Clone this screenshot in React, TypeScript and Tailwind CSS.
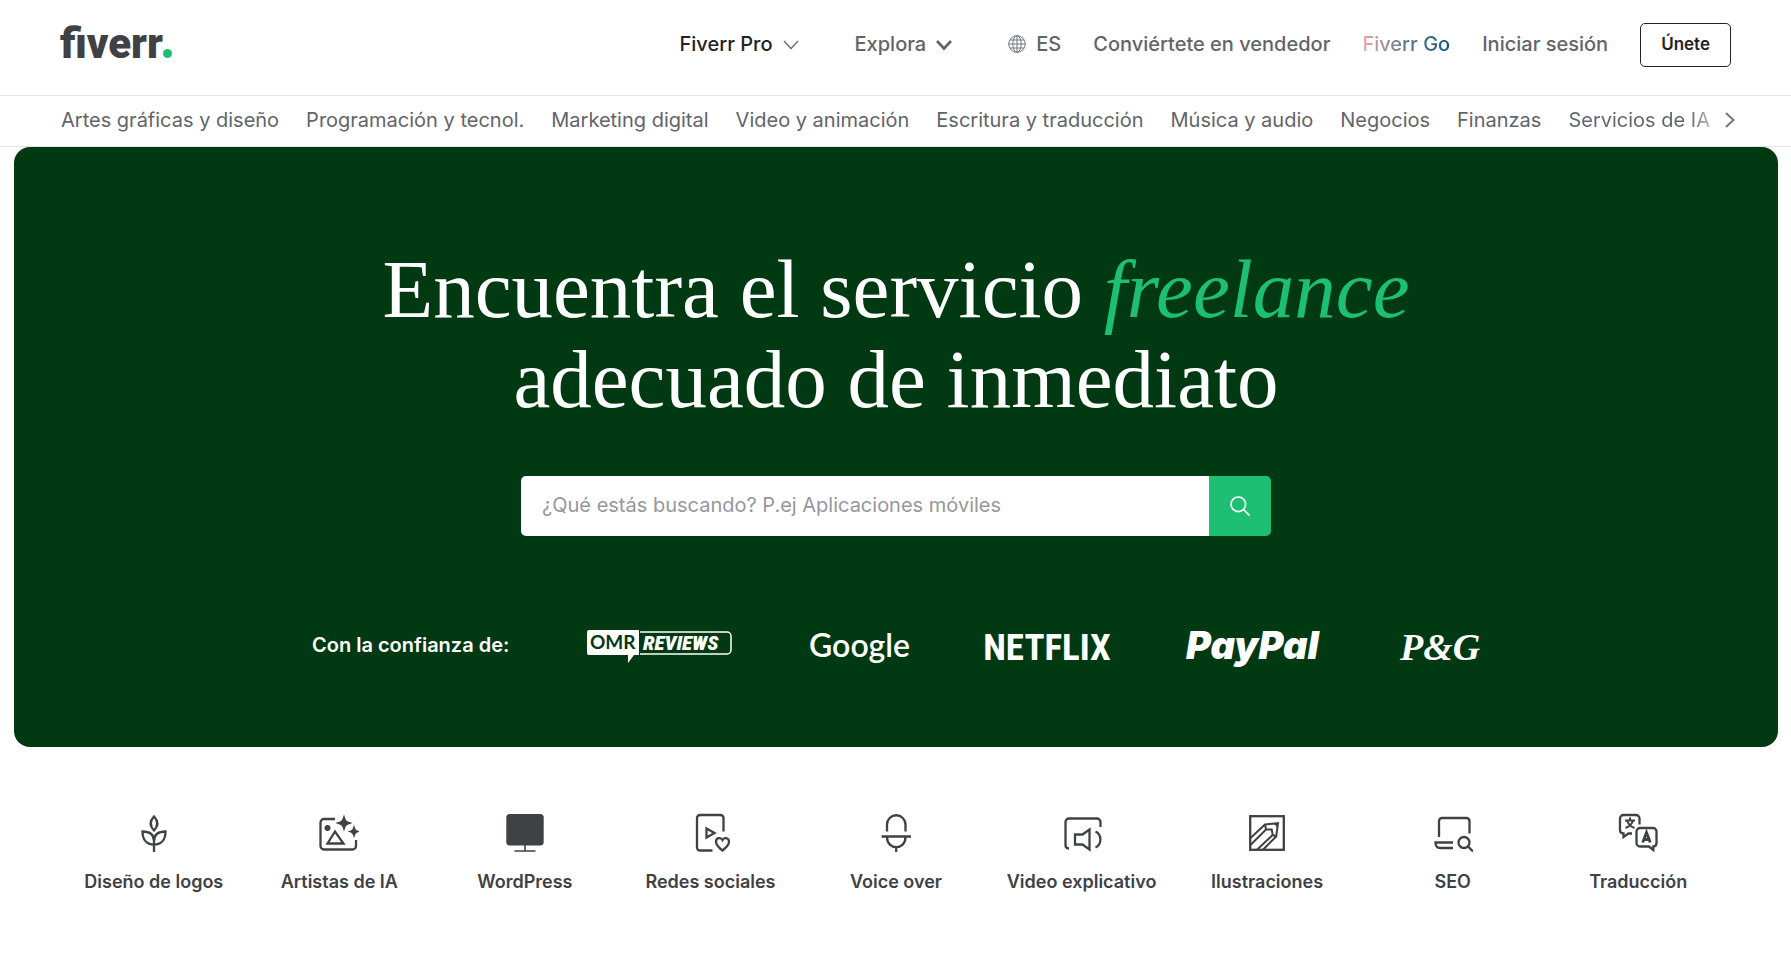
import type { ReactNode } from "react";

const categories = [
  "Artes gráficas y diseño",
  "Programación y tecnol.",
  "Marketing digital",
  "Video y animación",
  "Escritura y traducción",
  "Música y audio",
  "Negocios",
  "Finanzas",
  "Servicios de IA",
];

function Icon({ children }: { children: ReactNode }) {
  return (
    <svg
      className="size-10"
      viewBox="0 0 40 40"
      fill="none"
      stroke="#404145"
      strokeWidth="2.300"
      aria-hidden="true"
    >
      {children}
    </svg>
  );
}

function Chevron({ bold = false }: { bold?: boolean }) {
  return (
    <svg
      className="mt-0.5 h-4 w-4"
      viewBox="0 0 16 16"
      fill="none"
      stroke={bold ? "#62646a" : "#74767e"}
      strokeWidth={bold ? "2.6" : "1.6"}
      aria-hidden="true"
    >
      <path d="M1 4 8 11.500 15 4" />
    </svg>
  );
}

const services: { label: string; icon: ReactNode }[] = [
  {
    label: "Diseño de logos",
    icon: (
      <Icon>
        <path d="M20 3.500c-4.600 4.800-4.600 9.200 0 14 4.600-4.800 4.600-9.200 0-14Z" />
        <path d="M20 39V27M20 31.500C12.500 31.500 8.500 26.500 8.500 18.500 15.500 18.500 20 21.500 20 28M20 31.500C27.500 31.500 31.500 26.500 31.500 18.500 24.500 18.500 20 21.500 20 28" />
      </Icon>
    ),
  },
  {
    label: "Artistas de IA",
    icon: (
      <Icon>
        <path d="M16 6H5a3.500 3.500 0 0 0-3.500 3.500v23.500A3.500 3.500 0 0 0 5 36.500h28.500A3.500 3.500 0 0 0 37 33v-6" />
        <path d="M16 18.500 8.500 30.500h16Z" />
        <circle cx="8.500" cy="15" r="3" fill="#404145" stroke="none" />
        <path
          d="M25 3.700c1.200 4.300 2 5.100 6.300 6.300-4.300 1.200-5.100 2-6.300 6.300-1.200-4.300-2-5.100-6.300-6.300 4.300-1.200 5.100-2 6.300-6.300ZM35 14c.9 3.200 1.500 3.600 4.500 4.500-3 .9-3.600 1.500-4.500 4.500-.9-3-1.500-3.600-4.500-4.500 3-.9 3.600-1.300 4.500-4.500Z"
          fill="#404145"
          stroke="#404145"
          strokeWidth="1.300"
        />
      </Icon>
    ),
  },
  {
    label: "WordPress",
    icon: (
      <Icon>
        <rect x="1.300" y="1" width="37.400" height="31.500" rx="3.500" fill="#404145" stroke="none" />
        <path d="M20 32v5.500M9.500 38h21" strokeWidth="1.600" />
      </Icon>
    ),
  },
  {
    label: "Redes sociales",
    icon: (
      <Icon>
        <path d="M22.500 37.500H10A3 3 0 0 1 7 34.500V5a3 3 0 0 1 3-3h20.500a3 3 0 0 1 3 3v13.500" />
        <path d="M16.500 15.500v9l8-4.500Z" />
        <path d="M32.500 37.500c-3.500-2.600-6.500-5.300-6.500-8.700 0-4 4.800-5 6.500-1.800 1.700-3.200 6.500-2.200 6.500 1.800 0 3.400-3 6.100-6.500 8.700Z" />
      </Icon>
    ),
  },
  {
    label: "Voice over",
    icon: (
      <Icon>
        <path d="M11 18.500V11.500a9 9 0 0 1 18.500 0v7M5.500 23.500h29.500M11 24c0 13.500 18.500 13.500 18.500 0M20.200 34v5" />
      </Icon>
    ),
  },
  {
    label: "Video explicativo",
    icon: (
      <Icon>
        <path d="M7 35.500c-2.500 0-3.500-1-3.500-3.500V9A3.500 3.500 0 0 1 7 5.500h28A3.500 3.500 0 0 1 38.500 9v5" />
        <path d="M13 21.500h7.500l7-5v20l-7-5H13ZM33.500 18.500c6.500 3 6.500 13 0 16" />
      </Icon>
    ),
  },
  {
    label: "Ilustraciones",
    icon: (
      <Icon>
        <rect x="3.200" y="3.200" width="33.600" height="33.600" />
        <path
          d="M3.500 25 18 11.500 31 10.200 29.200 23.500 15.700 37M3.500 32 19 16.500h5.700l1 5.500L9.700 37M18 11.500l1 5M25.700 22l3.500 1.500"
          strokeWidth="2"
        />
        <path d="m26.500 10.500 4.500-.5-.6 4.500Z" fill="#404145" stroke="none" />
      </Icon>
    ),
  },
  {
    label: "SEO",
    icon: (
      <Icon>
        <path d="M6 24V8a3 3 0 0 1 3-3h24.500a3 3 0 0 1 3 3v12.500M20 29.500H2.500c0 3.500 1 5.500 4.500 5.500h13" />
        <circle cx="31" cy="29.500" r="5.500" />
        <path d="m35 33.500 5 5" />
      </Icon>
    ),
  },
  {
    label: "Traducción",
    icon: (
      <Icon>
        <path d="M14 20.500h-3.500L5.500 24v-3.500C3 20.500 2 19.500 2 17V5.500A3.500 3.500 0 0 1 5.500 2h12.500A3.500 3.500 0 0 1 21.500 5.500v6" />
        <path d="M22 15h13a3.500 3.500 0 0 1 3.500 3.500V30c0 2.500-1 3.500-3.200 3.500V37L31 33.500h-9a3.500 3.500 0 0 1-3.500-3.500V18.500A3.500 3.500 0 0 1 22 15Z" />
        <path d="M7 7.500h10M12 4.500v3M15 7.500c-.8 3.200-3.500 6-7.500 7.500M9 7.500c1 3.200 3.500 6 7.500 7.500" strokeWidth="2" />
        <path d="m24.700 29.500 3.800-10 3.800 10M26 26.500h5" strokeWidth="2.800" />
      </Icon>
    ),
  },
];

function OmrReviews() {
  return (
    <svg className="h-9 w-[145px] overflow-visible" viewBox="0 0 145 36" role="img" aria-label="OMR Reviews">
      <path d="M2 2h50v25h-5l-6 8v-8H2a2 2 0 0 1-2-2V4a2 2 0 0 1 2-2Z" fill="#fff" />
      <path d="M53 4h87a4 4 0 0 1 4 4v14a4 4 0 0 1-4 4H53" fill="none" stroke="#fff" strokeWidth="1.500" />
      <text x="3" y="21" fontFamily="Lato" fontWeight="700" fontSize="19" fill="#003912">
        OMR
      </text>
      <text x="56" y="22" fontFamily="Roboto Condensed, Roboto" fontStyle="italic" fontWeight="900" fontSize="21" fill="#fff">
        REVIEWS
      </text>
    </svg>
  );
}

export default function App() {
  return (
    <div className="min-h-screen bg-white font-['Inter',sans-serif] text-[#62646a]">
      <header>
        <div className="flex h-24 items-center justify-between border-b border-[#e4e5e7] px-[60px] pb-1.5">
          <a href="#" aria-label="fiverr." className="flex items-baseline pb-0.5 font-['Roboto',sans-serif] text-[42px] leading-none font-black text-[#404145]">
            fiverr
            <span className="size-[9px] rounded-full bg-[#1dbf73]" />
          </a>
          <nav className="flex items-center gap-8 text-[20px] font-medium">
            <button className="mr-6 flex items-center gap-[10px] pb-0.5 text-[#222325]">
              Fiverr Pro
              <Chevron />
            </button>
            <button className="mr-6 flex items-center gap-[10px] pb-0.5">
              Explora
              <Chevron bold />
            </button>
            <button className="flex items-center gap-[10px] pb-0.5">
              <svg className="size-[18px]" viewBox="0 0 18 18" fill="none" stroke="#74767e" aria-hidden="true">
                <circle cx="9" cy="9" r="8.300" />
                <ellipse cx="9" cy="9" rx="4.200" ry="8.300" />
                <path d="M9 .7v16.600M.7 9h16.600M2 5h14M2 13h14" />
              </svg>
              ES
            </button>
            <a href="#" className="pb-0.5">Conviértete en vendedor</a>
            <a href="#" className="bg-linear-to-r from-[#f1a5a5] via-[#5b7590] to-[#005b7f] bg-clip-text pb-0.5 text-transparent">
              Fiverr Go
            </a>
            <a href="#" className="pb-0.5">Iniciar sesión</a>
            <button className="h-11 rounded-[5px] border border-[#222325] px-5 text-[17px] font-semibold text-[#222325]">
              Únete
            </button>
          </nav>
        </div>
        <nav className="flex h-[51px] items-center justify-between border-b border-[#e4e5e7] pr-14 pb-0.5 pl-[61px] text-[20px] whitespace-nowrap">
          {categories.map((name, i) => (
            <a
              key={name}
              href="#"
              className={
                i === categories.length - 1
                  ? "bg-linear-to-r from-[#62646a] from-85% to-[#b5b6ba] bg-clip-text text-transparent"
                  : undefined
              }
            >
              {name}
            </a>
          ))}
          <button aria-label="Siguiente" className="-ml-3">
            <svg className="h-4 w-[10px]" viewBox="0 0 10 16" fill="none" stroke="#74767e" strokeWidth="2" aria-hidden="true">
              <path d="m1 1 7.500 7L1 15" />
            </svg>
          </button>
        </nav>
      </header>

      <main>
        <section className="mr-[13px] ml-[14px] flex flex-col items-center rounded-2xl bg-[#003912] pt-[97px] pb-[81px]">
          <h1 className="text-center font-['Liberation_Serif',serif] text-[83px] leading-[90px] text-white">
            Encuentra el servicio <em className="text-[#1dbf73]">freelance</em>
            <br />
            adecuado de inmediato
          </h1>
          <form className="mt-[52px] flex h-[60px] w-[750px] overflow-hidden rounded-[5px]">
            <input
              type="text"
              aria-label="Buscar servicios"
              placeholder="¿Qué estás buscando? P.ej Aplicaciones móviles"
              className="min-w-0 flex-1 bg-white px-[21px] pb-0.5 text-[20px] text-[#404145] outline-none placeholder:text-[#95979d]"
            />
            <button type="button" aria-label="Buscar" className="flex w-[62px] items-center justify-center bg-[#1dbf73]">
              <svg className="size-5" viewBox="0 0 20 20" fill="none" stroke="#fff" strokeWidth="1.700" aria-hidden="true">
                <circle cx="8.300" cy="8.300" r="7.300" />
                <path d="m13.500 13.500 6 6" />
              </svg>
            </button>
          </form>
          <div className="mt-[90px] flex h-10 w-[1168px] items-center justify-between text-white">
            <span className="pb-0.5 text-[20px] font-semibold">Con la confianza de:</span>
            <OmrReviews />
            <svg className="h-9 w-[99px] overflow-visible" viewBox="0 0 99 36" role="img" aria-label="Google">
              <text x="0" y="29" fontFamily="Lato" fontSize="32" fontWeight="600" fill="#fff">Google</text>
            </svg>
            <svg className="h-9 w-[123px] overflow-visible" viewBox="0 0 123 36" role="img" aria-label="Netflix">
              <text x="61" y="32" textAnchor="middle" fontFamily="Roboto Condensed, Roboto" fontSize="37" fontWeight="700" fill="#fff">NETFLIX</text>
            </svg>
            <svg className="h-9 w-[136px] overflow-visible" viewBox="0 0 136 36" role="img" aria-label="PayPal">
              <text x="0" y="31" fontFamily="Inter" fontSize="38" fontStyle="italic" fontWeight="900" fill="#fff">PayPal</text>
            </svg>
            <svg className="h-9 w-20 overflow-visible" viewBox="0 0 80 36" role="img" aria-label="P&amp;G">
              <text x="0" y="32" fontFamily="Liberation Serif" fontSize="38" fontStyle="italic" fontWeight="700" fill="#fff">P&amp;G</text>
            </svg>
          </div>
        </section>

        <section className="grid grid-cols-9 pt-[66px] pr-[60px] pb-12 pl-[61px]">
          {services.map(({ label, icon }) => (
            <a key={label} href="#" className="flex flex-col items-center gap-[17px] text-[18px] leading-6 font-semibold whitespace-nowrap text-[#404145]">
              {icon}
              {label}
            </a>
          ))}
        </section>
      </main>
    </div>
  );
}
